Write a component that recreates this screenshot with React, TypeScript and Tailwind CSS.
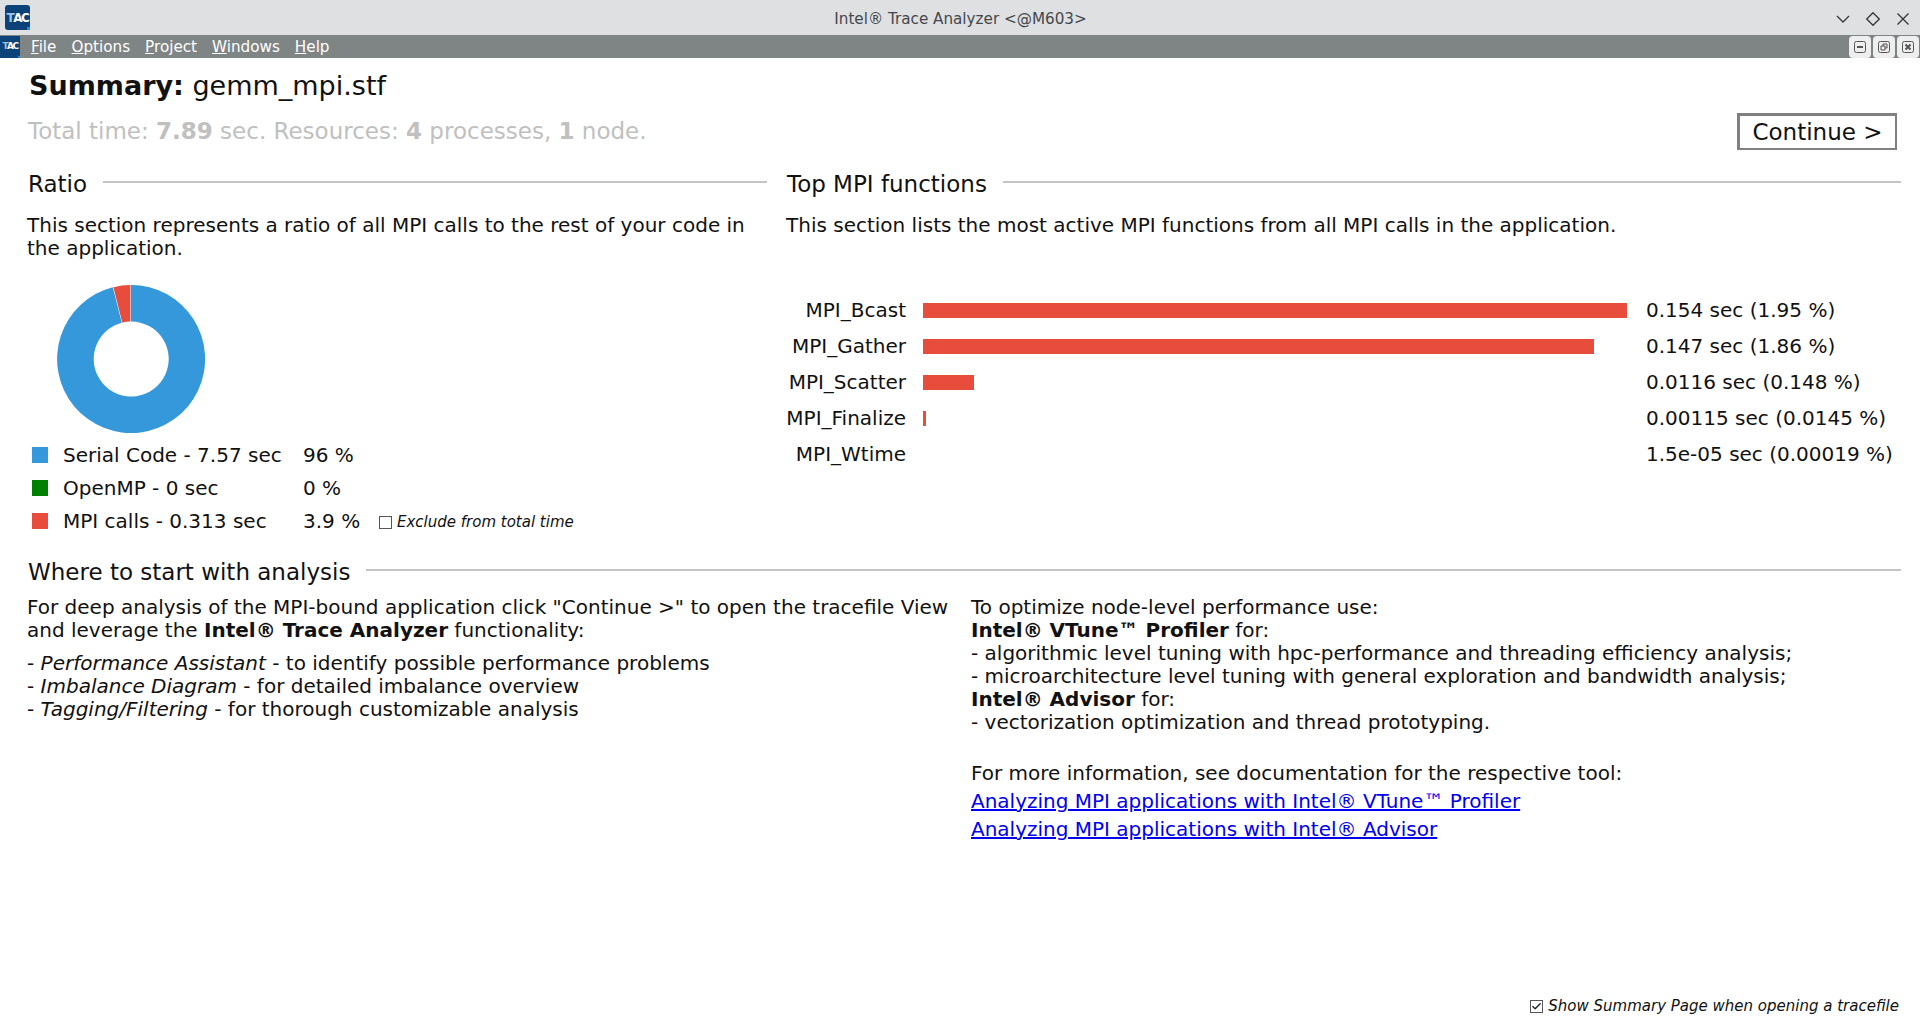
import { Check } from 'lucide-react';

const legend = [
    { label: 'Serial Code - 7.57 sec', pct: '96 %', color: 'bg-[#3498db]' },
    { label: 'OpenMP - 0 sec', pct: '0 %', color: 'bg-[#008000]' },
    { label: 'MPI calls - 0.313 sec', pct: '3.9 %', color: 'bg-[#e74c3c]' },
];

const functions = [
    { name: 'MPI_Bcast', width: 704, value: '0.154 sec (1.95 %)' },
    { name: 'MPI_Gather', width: 671, value: '0.147 sec (1.86 %)' },
    { name: 'MPI_Scatter', width: 51, value: '0.0116 sec (0.148 %)' },
    { name: 'MPI_Finalize', width: 3, value: '0.00115 sec (0.0145 %)' },
    { name: 'MPI_Wtime', width: 0, value: '1.5e-05 sec (0.00019 %)' },
];

const menus = [
    ['F', 'ile'],
    ['O', 'ptions'],
    ['P', 'roject'],
    ['W', 'indows'],
    ['H', 'elp'],
];

const Logo = ({ small }: { small?: boolean }) => (
    <div
        className={
            small
                ? 'relative w-5 h-[22px] bg-[#0b4379] flex items-center justify-center text-white font-bold text-[9px] tracking-[-1.5px]'
                : 'relative w-[25px] h-[25px] rounded-[3px] bg-[#0b4379] flex items-center justify-center text-white font-bold text-[12px] tracking-[-1.5px]'
        }
    >
        <span className="text-[#9fc4e6]">T</span>AC
        <div className={`absolute right-0 bottom-0 bg-[#1c8ee0] ${small ? 'w-0.5 h-0.5' : 'w-[3px] h-[3px]'}`} />
    </div>
);

const SectionTitle = ({ title }: { title: string }) => (
    <div className="flex items-center gap-4 h-[26px]">
        <span className="text-[23px] text-[#111] whitespace-nowrap">{title}</span>
        <div className="flex-1 h-0.5 bg-[#c4c4c4] -mt-1" />
    </div>
);

const Donut = () => (
    <svg width="148" height="148" viewBox="0 0 148 148" className="block">
        <path
            d="M74 0 A74 74 0 1 1 55.8 2.3 L64.8 37.7 A37.5 37.5 0 1 0 74 36.5 Z"
            fill="#3498db"
        />
        <path d="M73.4 0 A74 74 0 0 0 56.4 2.2 L65.2 37.6 A37.5 37.5 0 0 1 73.4 36.5 Z" fill="#e74c3c" />
    </svg>
);

export default function App() {
    return (
        <div className="w-[1920px] h-[1022px] flex flex-col bg-white text-[#111] font-['DejaVu_Sans',sans-serif] overflow-hidden">
            {/* window title */}
            <div className="h-[35px] shrink-0 bg-[#dfe0e2] flex items-center pl-[5px] pr-[10px]">
                <Logo />
                <div className="flex-1 text-center text-[15.2px] text-[#44484c] pt-[3px] pl-[55px]">Intel® Trace Analyzer &lt;@M603&gt;</div>
                <div className="flex items-center gap-4 text-[#33373a] pt-[3px]">
                    <svg width="14" height="14" viewBox="0 0 14 14" fill="none" stroke="currentColor" strokeWidth="1.3">
                        <path d="M1 4 L7 10 L13 4" />
                    </svg>
                    <svg width="14" height="14" viewBox="0 0 14 14" fill="none" stroke="currentColor" strokeWidth="1.3">
                        <path d="M7 .7 L13.3 7 L7 13.3 L.7 7 Z" />
                    </svg>
                    <svg width="14" height="14" viewBox="0 0 14 14" fill="none" stroke="currentColor" strokeWidth="1.3">
                        <path d="M1.5 1.5 L12.5 12.5 M12.5 1.5 L1.5 12.5" />
                    </svg>
                </div>
            </div>

            {/* menu bar */}
            <div className="h-[23px] shrink-0 bg-[#7f8585] flex items-center">
                <Logo small />
                <div className="flex items-center gap-[15px] ml-[11px] pt-[2px] text-[15.2px] text-white">
                    {menus.map(([key, rest]) => (
                        <span key={key}>
                            <span className="underline">{key}</span>
                            {rest}
                        </span>
                    ))}
                </div>
                <div className="ml-auto flex items-center gap-0.5 pr-px">
                    {['minus', 'restore', 'close'].map((kind) => (
                        <div key={kind} className="w-[22px] h-[22px] bg-[#eeeeee] rounded-sm flex items-center justify-center">
                            <svg width="12" height="12" viewBox="0 0 12 12" fill="none" stroke="#555" strokeWidth="1">
                                <rect x=".5" y=".5" width="11" height="11" rx="2" />
                                {kind === 'minus' && <path d="M3 6 H9" strokeWidth="2" />}
                                {kind === 'restore' && <path d="M3 5 H7 V9 H3 Z M5 5 V3 H9 V7 H7" />}
                                {kind === 'close' && <path d="M3.5 3.5 L8.5 8.5 M8.5 3.5 L3.5 8.5" strokeWidth="2" />}
                            </svg>
                        </div>
                    ))}
                </div>
            </div>

            {/* summary page */}
            <div className="flex-1 flex flex-col min-h-0 pl-7 pr-[19px] text-[20px] leading-[23px]">
                <div className="pt-[11px] h-[52px] text-[27px] leading-[34px] pl-px">
                    <span className="font-bold">Summary:</span> gemm_mpi.stf
                </div>
                <div className="flex items-center justify-between h-[37px] mt-[3px]">
                    <div className="text-[23px] text-[#c0c0c0]">
                        Total time: <b>7.89</b> sec. Resources: <b>4</b> processes, <b>1</b> node.
                    </div>
                    <button className="w-[160px] h-[37px] mr-1 pb-px border-2 border-l-[3px] border-t-[3px] border-[#808080] text-[23px] leading-[28px] text-[#111] bg-white">
                        Continue &gt;
                    </button>
                </div>

                <div className="flex gap-[19px] mt-[21px]">
                    <div className="w-[739px] shrink-0">
                        <SectionTitle title="Ratio" />
                        <p className="mt-[17px] w-[745px] -ml-px">
                            This section represents a ratio of all MPI calls to the rest of your code in the application.
                        </p>
                        <div className="mt-[25px] ml-[29px]">
                            <Donut />
                        </div>
                        <div className="mt-[6px] flex flex-col">
                            {legend.map((row) => (
                                <div key={row.label} className="flex items-center h-[33px] pl-1">
                                    <div className={`w-4 h-4 -mt-px ${row.color}`} />
                                    <span className="ml-[15px] w-[240px]">{row.label}</span>
                                    <span className="w-[76px]">{row.pct}</span>
                                    {row.pct === '3.9 %' && (
                                        <span className="flex items-center pt-px text-[15px] italic">
                                            <span className="w-[13px] h-[13px] border border-[#555] mr-[5px]" />
                                            Exclude from total time
                                        </span>
                                    )}
                                </div>
                            ))}
                        </div>
                    </div>
                    <div className="flex-1">
                        <div className="pl-px">
                            <SectionTitle title="Top MPI functions" />
                        </div>
                        <p className="mt-[17px]">
                            This section lists the most active MPI functions from all MPI calls in the application.
                        </p>
                        <div className="mt-[55px] flex flex-col">
                            {functions.map((fn) => (
                                <div key={fn.name} className="flex items-center h-9">
                                    <span className="w-[120px] text-right">{fn.name}</span>
                                    <div className="w-[723px] ml-[17px] mr-0">
                                        <div className="h-[15px] bg-[#e74c3c]" style={{ width: fn.width }} />
                                    </div>
                                    <span className="whitespace-nowrap">{fn.value}</span>
                                </div>
                            ))}
                        </div>
                    </div>
                </div>

                <div className="mt-[21px]">
                    <SectionTitle title="Where to start with analysis" />
                </div>
                <div className="flex mt-[11px]">
                    <div className="w-[944px] shrink-0 -ml-px">
                        <p>
                            For deep analysis of the MPI-bound application click "Continue &gt;" to open the tracefile View and leverage the{' '}
                            <b>Intel® Trace Analyzer</b> functionality:
                        </p>
                        <p className="mt-[10px]">
                            - <i>Performance Assistant</i> - to identify possible performance problems
                            <br />- <i>Imbalance Diagram</i> - for detailed imbalance overview
                            <br />- <i>Tagging/Filtering</i> - for thorough customizable analysis
                        </p>
                    </div>
                    <div className="flex-1">
                        <p>
                            To optimize node-level performance use:
                            <br />
                            <b>Intel® VTune™ Profiler</b> for:
                            <br />- algorithmic level tuning with hpc-performance and threading efficiency analysis;
                            <br />- microarchitecture level tuning with general exploration and bandwidth analysis;
                            <br />
                            <b>Intel® Advisor</b> for:
                            <br />- vectorization optimization and thread prototyping.
                        </p>
                        <p className="mt-[28px]">For more information, see documentation for the respective tool:</p>
                        <p className="mt-[2px] leading-[28px] text-[#0000ee]">
                            <a className="underline">Analyzing MPI applications with Intel® VTune™ Profiler</a>
                            <br />
                            <a className="underline">Analyzing MPI applications with Intel® Advisor</a>
                        </p>
                    </div>
                </div>

                <div className="mt-auto h-[27px] flex items-start justify-end pr-[2px] text-[15px] italic">
                    <span className="flex items-center">
                        <span className="w-[13px] h-[13px] border border-[#555] mr-[5px] flex items-center justify-center not-italic">
                            <Check size={11} strokeWidth={3} className="text-[#222]" />
                        </span>
                        Show Summary Page when opening a tracefile
                    </span>
                </div>
            </div>
        </div>
    );
}
